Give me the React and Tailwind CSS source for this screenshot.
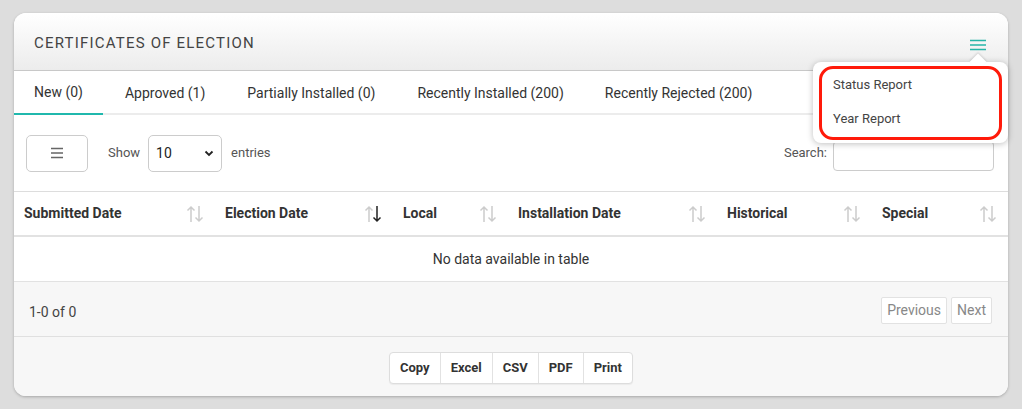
import React from "react";

const tabs = ["New (0)", "Approved (1)", "Partially Installed (0)", "Recently Installed (200)", "Recently Rejected (200)"];

const columns = [
  { label: "Submitted Date", w: "w-[201px]", desc: false },
  { label: "Election Date", w: "w-[178px]", desc: true },
  { label: "Local", w: "w-[115px]", desc: false },
  { label: "Installation Date", w: "w-[209px]", desc: false },
  { label: "Historical", w: "w-[155px]", desc: false },
  { label: "Special", w: "flex-1", desc: false },
];

const SortIcon = ({ desc }) => (
  <svg width="20" height="20" viewBox="0 0 20 20" fill="none" strokeWidth="1.5">
    <g stroke="#ccc">
      <path d="M6 18V3M2.5 6.5L6 3l3.5 3.5" />
    </g>
    <g stroke={desc ? "#222" : "#ccc"}>
      <path d="M14 2v15M10.5 13.5L14 17l3.5-3.5" />
    </g>
  </svg>
);

const Burger = ({ color, w = 16 }) => (
  <svg width={w} height="12" viewBox={`0 0 ${w} 12`} stroke={color} strokeWidth="1.6">
    <path d={`M0 1.5H${w}M0 6H${w}M0 10.5H${w}`} />
  </svg>
);

const tabPad = (i) => {
  if (i === 0) return "px-[20px] border-b-[2px] border-[#20b8ad]";
  if (i === 1) return "pl-[22px] pr-[21px]";
  if (i === 4) return "pl-[20px] pr-[21px]";
  return "px-[21px]";
};

export default function App() {
  return (
    <div className="min-h-[409px] bg-[#dddddd] px-[14px] pt-[13px] font-['Roboto',sans-serif]">
      <div className="relative rounded-[12px] bg-white shadow-[0_1px_3px_rgba(0,0,0,0.25)]">
        {/* Header */}
        <div className="flex h-[58px] items-center justify-between rounded-t-[12px] border-b border-[#c8c8c8] bg-gradient-to-b from-white to-[#ececec] pl-[20px] pr-[22px]">
          <h2 className="pt-[4px] text-[15px] tracking-[0.08em] text-[#444]">CERTIFICATES OF ELECTION</h2>
          <div className="mt-[6px]">
            <Burger color="#26b5a8" />
          </div>
        </div>

        {/* Tabs */}
        <div className="flex h-[44px] items-stretch border-b-[2px] border-[#ececec] text-[14px] text-[#333]">
          {tabs.map((t, i) => (
            <div key={t} className={`-mb-[2px] flex items-center ${tabPad(i)}`}>
              {t}
            </div>
          ))}
        </div>

        {/* Controls */}
        <div className="flex h-[76px] items-center justify-between pl-[12px] pr-[14px] text-[13px] text-[#555]">
          <div className="flex items-center">
            <button className="flex h-[37px] w-[62px] items-center justify-center rounded-[5px] border border-[#ccc] bg-white">
              <Burger color="#666" w={12} />
            </button>
            <span className="ml-[20px]">Show</span>
            <div className="ml-[8px] flex h-[37px] w-[74px] items-center justify-between rounded-[5px] border border-[#ccc] px-[7px] text-[14px] text-[#222]">
              <span>10</span>
              <svg width="10" height="8" viewBox="0 0 10 8" fill="none" stroke="#222" strokeWidth="1.8">
                <path d="M1.5 2.5L5 6l3.5-3.5" />
              </svg>
            </div>
            <span className="ml-[9px]">entries</span>
          </div>
          <div className="flex items-center">
            <span>Search:</span>
            <div className="ml-[6px] mt-[6px] h-[30px] w-[161px] rounded-[4px] border border-[#ccc] bg-white" />
          </div>
        </div>

        {/* Table */}
        <div className="border-t border-[#ddd]">
          <div className="flex h-[45px] items-center border-b-[2px] border-[#e2e2e2] text-[14px] font-bold text-[#333]">
            {columns.map((c) => (
              <div key={c.label} className={`${c.w} flex items-center justify-between pl-[10px] pr-[10px]`}>
                <span>{c.label}</span>
                <SortIcon desc={c.desc} />
              </div>
            ))}
          </div>
          <div className="flex h-[45px] items-center justify-center border-b border-[#e2e2e2] text-[14px] text-[#333]">
            No data available in table
          </div>
        </div>

        {/* Footer */}
        <div className="rounded-b-[12px] bg-[#f7f7f7]">
          <div className="flex h-[55px] items-center justify-between border-b border-[#e0e0e0] pl-[15px] pr-[16px] text-[14px] text-[#444]">
            <span className="pt-[6px]">1-0 of 0</span>
            <div className="flex gap-[4px] pt-[2px] text-[14px] text-[#888]">
              <span className="rounded-[2px] border border-[#e2e2e2] bg-white px-[5px] py-[2px]">Previous</span>
              <span className="rounded-[2px] border border-[#e2e2e2] bg-white px-[5px] py-[2px]">Next</span>
            </div>
          </div>
          <div className="flex h-[59px] items-start justify-center pt-[15px]">
            <div className="flex h-[32px] overflow-hidden rounded-[4px] border border-[#ddd] bg-white text-[13px] font-bold text-[#333] shadow-[0_1px_1px_rgba(0,0,0,0.05)]">
              {["Copy", "Excel", "CSV", "PDF", "Print"].map((b, i) => (
                <span key={b} className={`flex items-center px-[10px] ${i > 0 ? "border-l border-[#e2e2e2]" : ""}`}>
                  {b}
                </span>
              ))}
            </div>
          </div>
        </div>

        {/* Dropdown menu */}
        <div className="absolute left-[799px] top-[49px] z-10 h-[81px] w-[195px] rounded-[8px] bg-white shadow-[0_1px_6px_rgba(0,0,0,0.25)]">
          <div className="absolute -top-[6px] right-[24px] h-[12px] w-[12px] rotate-45 bg-white shadow-[-1px_-1px_2px_rgba(0,0,0,0.12)]" />
          <div className="relative flex h-full flex-col px-[20px] pt-[15px] text-[13px] text-[#444]">
            <span className="leading-[16px]">Status Report</span>
            <span className="mt-[18px] leading-[16px]">Year Report</span>
          </div>
          <div className="absolute left-[6px] top-[4px] h-[74px] w-[183px] rounded-[14px] border-[3px] border-[#ff1a0a]" />
        </div>
      </div>
    </div>
  );
}
